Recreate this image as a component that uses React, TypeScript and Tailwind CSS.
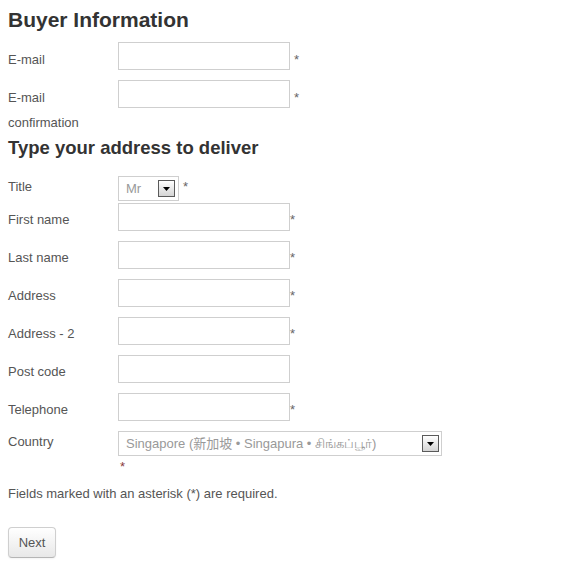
function Arrow() {
  return (
    <span className="flex h-[17px] w-[17px] items-center justify-center border border-[#5a5a5a] bg-gradient-to-b from-white to-[#d4d4d4]">
      <svg width="7" height="4" viewBox="0 0 7 4">
        <path d="M0 0h7L3.5 4z" fill="#000" />
      </svg>
    </span>
  );
}

function Star({ sel, gap, pad = "pt-[4px]" }: { sel?: boolean; gap?: boolean; pad?: string }) {
  return (
    <span
      className={
        (sel ? "leading-[22px] " : pad + " leading-[25px] ") +
        (gap ? "ml-[4px] " : "") +
        "text-[13px] text-[#666]"
      }
    >
      *
    </span>
  );
}

function InputRow({
  label,
  star = true,
  gap,
  pad = "pt-[4px]",
}: {
  label: string;
  star?: boolean;
  gap?: boolean;
  pad?: string;
}) {
  return (
    <div className="flex items-start">
      <label className={"w-[110px] shrink-0 text-[13px] leading-[25px] text-[#555] " + pad}>{label}</label>
      <input type="text" className="mb-[10px] h-[28px] w-[172px] border border-[#cfcfcf] bg-white outline-none" />
      {star && <Star gap={gap} pad={pad} />}
    </div>
  );
}

export default function App() {
  return (
    <main className="min-h-[566px] bg-white pl-[8px] font-['Liberation_Sans',Arial,sans-serif] text-[13px] text-[#555]">
      <h2 className="mb-[10px] pt-[8px] text-[21px] font-bold leading-[24px] text-[#333]">Buyer Information</h2>

      <InputRow label="E-mail" gap pad="pt-[5px]" />
      <InputRow label="E-mail confirmation" gap pad="pt-[5px]" />

      <h3 className="mb-[17px] mt-[2px] text-[18.5px] font-bold leading-[22px] text-[#333]">Type your address to deliver</h3>

      <div className="flex items-start">
        <label className="w-[110px] shrink-0 leading-[22px]">Title</label>
        <div className="mb-[2px] flex h-[25px] w-[61px] items-center justify-between border border-[#cfcfcf] bg-white pl-[7px] pr-[3px]">
          <span className="text-[#999]">Mr</span>
          <Arrow />
        </div>
        <Star sel gap />
      </div>

      <InputRow label="First name" />
      <InputRow label="Last name" />
      <InputRow label="Address" />
      <InputRow label="Address - 2" />
      <InputRow label="Post code" star={false} />
      <InputRow label="Telephone" />

      <div className="flex items-start">
        <label className="w-[110px] shrink-0 leading-[22px]">Country</label>
        <div className="flex flex-col">
          <div className="flex h-[25px] w-[324px] items-center justify-between border border-[#cfcfcf] bg-white pl-[7px] pr-[2px]">
            <span className="whitespace-nowrap font-['Liberation_Sans','Noto_Sans_CJK_SC','Noto_Sans',sans-serif] text-[#999]">
              Singapore (新加坡 • Singapura • சிங்கப்பூர்)
            </span>
            <Arrow />
          </div>
          <span className="pl-[2px] text-[13px] leading-[22px] text-[#8a3a3a]">*</span>
        </div>
      </div>

      <p className="mt-[6px] leading-[20px]">Fields marked with an asterisk (*) are required.</p>

      <button className="mt-[23px] h-[31px] w-[48px] rounded-[4px] border border-[#cfcfcf] border-b-[#b5b5b5] bg-gradient-to-b from-white to-[#e8e8e8] text-[13px] text-[#555] shadow-[inset_0_1px_0_rgba(255,255,255,0.2),0_1px_2px_rgba(0,0,0,0.05)]">
        Next
      </button>
    </main>
  );
}
